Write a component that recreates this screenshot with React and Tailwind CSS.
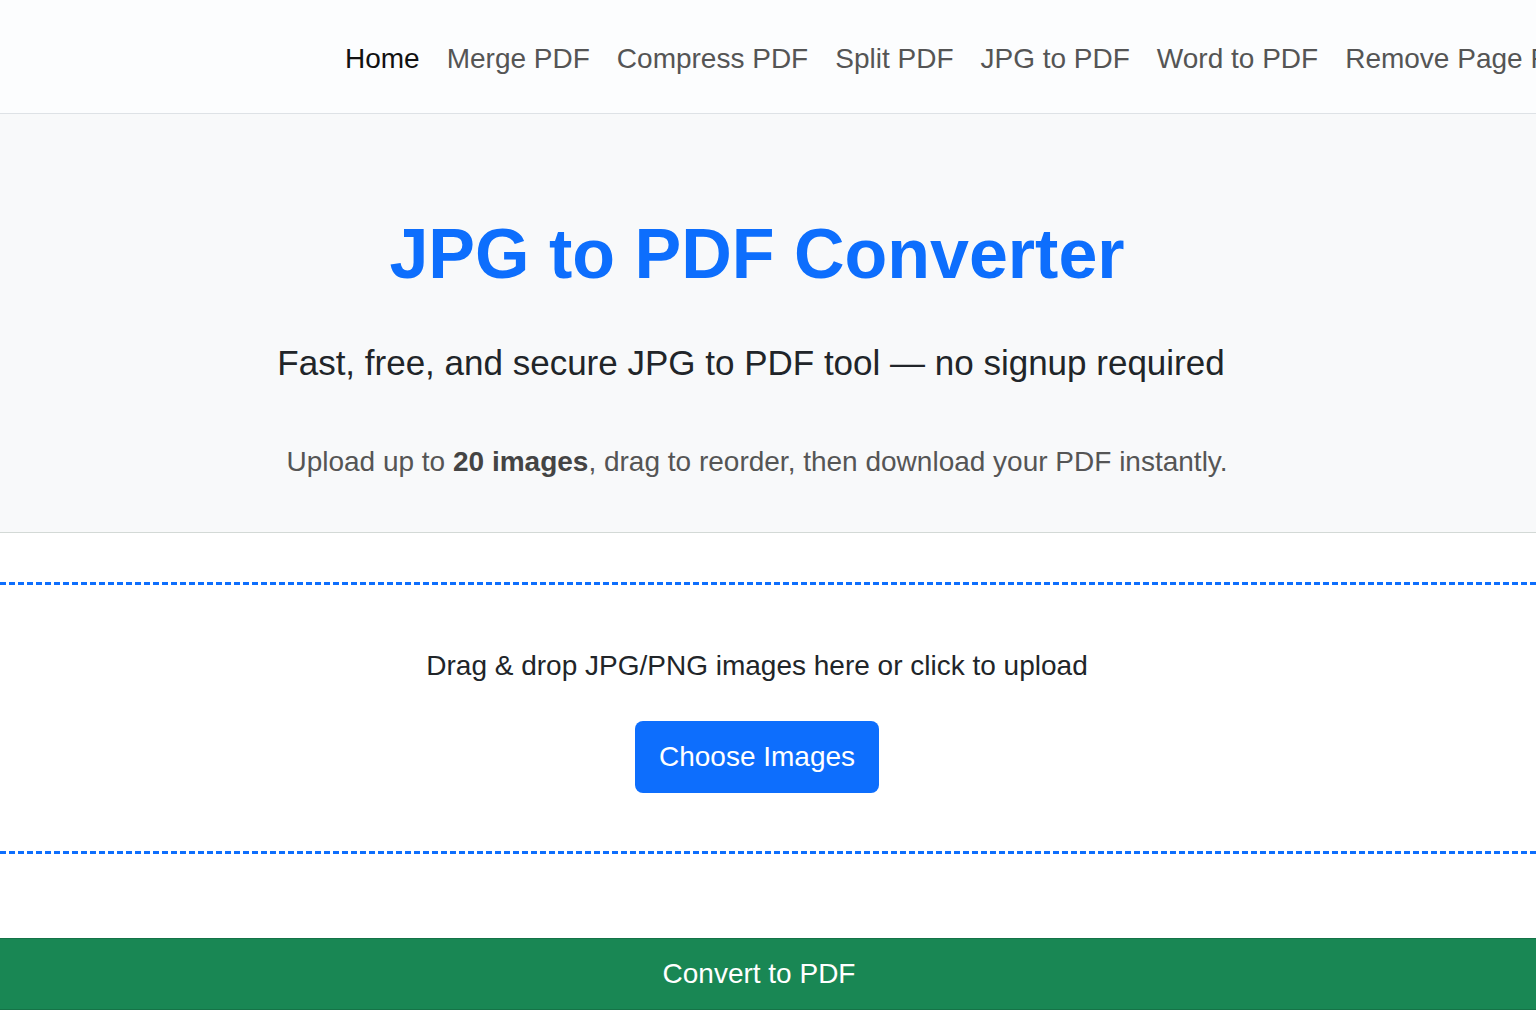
import React from "react";

const links = ["Merge PDF", "Compress PDF", "Split PDF", "JPG to PDF", "Word to PDF", "Remove Page PDF", "Rotate PDF"];

const App = () => {
  return (
    <div className="min-h-screen bg-white font-['Liberation_Sans',Arial,sans-serif] overflow-hidden">
      {/* top nav */}
      <nav className="h-[114px] bg-[#fcfdfe] border-b border-[#dee2e6] flex items-center pt-[5px] pl-[345px] whitespace-nowrap overflow-hidden">
        <ul className="flex items-center gap-[27px] text-[28px] leading-none">
          <li className="text-[#111]">Home</li>
          {links.map((l) => (
            <li key={l} className="text-[#555]">
              {l}
            </li>
          ))}
        </ul>
      </nav>

      {/* hero */}
      <section className="bg-[#f8f9fa] border-b border-[#d3d9d6] pt-[105px] pb-[56px] pr-[22px] flex flex-col items-center text-center">
        <h1 className="text-[70px] leading-none font-bold text-[#0d6efd]">JPG to PDF Converter</h1>
        <p className="mt-[56px] pr-[12px] text-[35px] leading-none text-[#212529]">
          Fast, free, and secure JPG to PDF tool — no signup required
        </p>
        <p className="mt-[68px] text-[28px] leading-none text-[#555]">
          Upload up to <strong className="font-bold text-[#444]">20 images</strong>, drag to reorder, then download your PDF instantly.
        </p>
      </section>

      {/* drop zone */}
      <div className="mt-[49px] border-y-[3px] border-dashed border-[#0d6efd] pt-[67px] pb-[58px] pr-[22px] flex flex-col items-center">
        <p className="text-[28px] leading-none text-[#212529]">Drag &amp; drop JPG/PNG images here or click to upload</p>
        <button className="mt-[41px] bg-[#0d6efd] text-white text-[28px] leading-none px-[24px] py-[22px] rounded-lg">
          Choose Images
        </button>
      </div>

      <button className="mt-[84px] w-full h-[72px] bg-[#198754] border-y border-[#157347] text-white text-[28px] leading-none pr-[18px]">
        Convert to PDF
      </button>
    </div>
  );
};

export default App;
